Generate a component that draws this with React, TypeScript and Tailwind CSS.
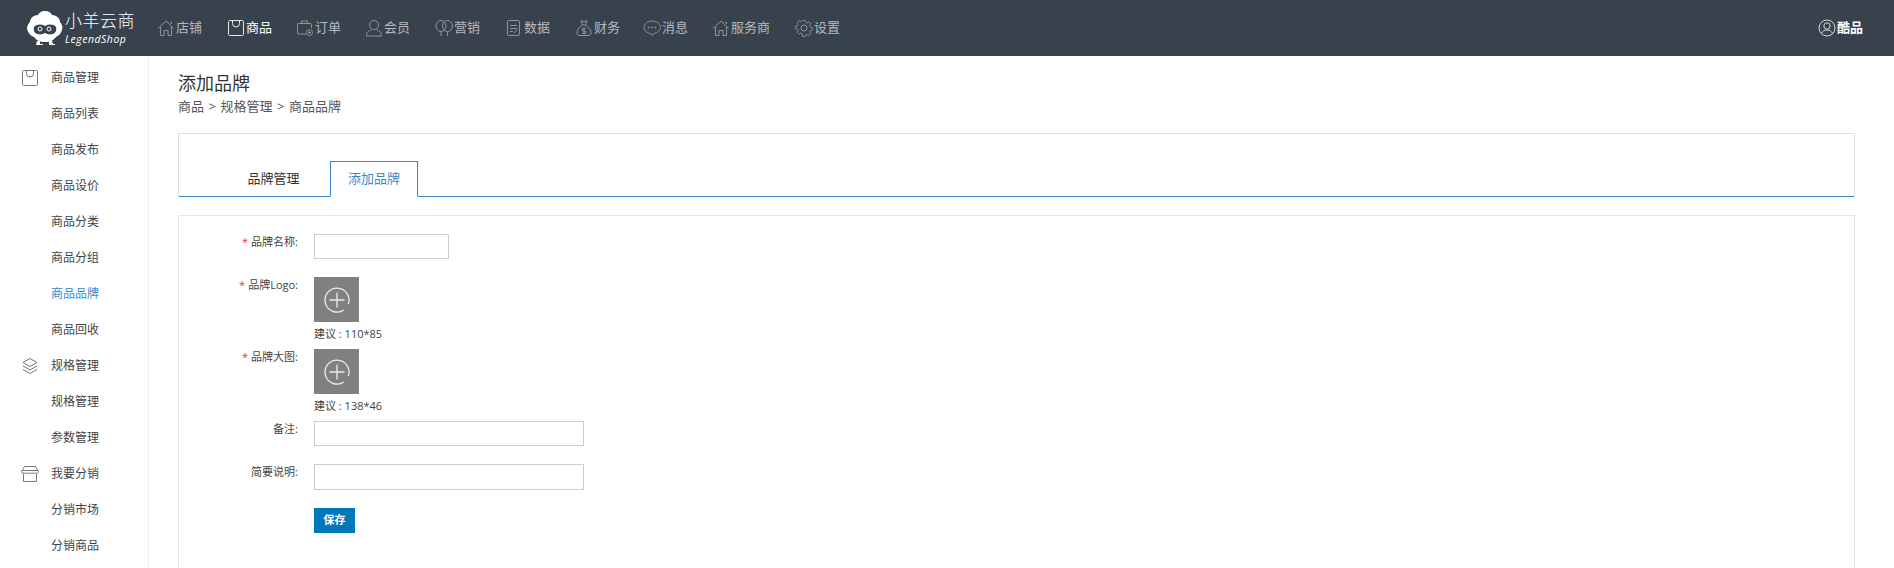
import type { ReactNode } from 'react'

const font = { stroke: 'currentColor', fill: 'none', strokeWidth: 1 } as const

function Icon({ children, className = '' }: { children: ReactNode; className?: string }) {
  return (
    <svg viewBox="0 0 18 18" {...font} className={`w-[18px] h-[18px] shrink-0 ${className}`}>
      {children}
    </svg>
  )
}

const HomeIcon = () => (
  <Icon>
    <path d="M1 9.500 9 2l7.500 7.500M3.500 8v8.500h3.500v-5h4v5h3.500V8M13 3.500h1.500V5" />
  </Icon>
)
const BagIcon = () => (
  <Icon>
    <path d="M2.500 1.500h13a1 1 0 0 1 1 1v13a1 1 0 0 1-1 1h-13a1 1 0 0 1-1-1v-13a1 1 0 0 1 1-1z" />
    <path d="M5.500 2v2.500a3.500 3.500 0 0 0 7 0V2" />
  </Icon>
)
const OrderIcon = () => (
  <Icon>
    <path d="M10 15H2.500a1 1 0 0 1-1-1V5.500a1 1 0 0 1 1-1h12a1 1 0 0 1 1 1V9M5.500 4.500V2h6v2.500" />
    <circle cx="13.500" cy="13.500" r="3" />
    <path d="M12 13.500h3M13.500 12v3" />
  </Icon>
)
const UserIcon = () => (
  <Icon>
    <circle cx="9" cy="6" r="4.500" />
    <path d="M1.500 17v-1.500c0-2.500 2.500-4 5-4.500M16.500 17v-1.500c0-2.500-2.500-4-5-4.500M1.500 17h15" />
  </Icon>
)
const MarketIcon = () => (
  <Icon>
    <ellipse cx="6" cy="7" rx="5" ry="5.500" />
    <ellipse cx="12.500" cy="7" rx="5" ry="5.500" />
    <path d="M6 12.500V17M12.500 12.500V17" />
  </Icon>
)
const DataIcon = () => (
  <Icon>
    <path d="M13 1.500H4a1.500 1.500 0 0 0-1.500 1.500v12A1.500 1.500 0 0 0 4 16.500h9a1.500 1.500 0 0 0 1.500-1.500V3A1.500 1.500 0 0 0 13 1.500z" />
    <path d="M5 6.500h7M5 9.500h7M5 12.500h3M9 14l3.500-3.500" />
  </Icon>
)
const MoneyIcon = () => (
  <Icon>
    <path d="M6 1.500 9 3l3-1.500L10.500 6h-3zM7.500 6C4 8 2 11 2 14c0 2 1.500 2.500 3 2.500h8c1.500 0 3-.5 3-2.500 0-3-2-6-5.500-8" />
    <path d="M10.500 9.500H8.200a1.200 1.200 0 0 0 0 2.500h1.600a1.200 1.200 0 0 1 0 2.500H7.500M9 8.500v7" />
  </Icon>
)
const ChatIcon = () => (
  <Icon>
    <path d="M9 2c-4.500 0-8 2.800-8 6.300 0 3.500 3.500 6.200 7 6.200l1.500 2 1.500-2.300c3.500-.5 6.500-2.800 6.500-5.900C17.500 4.800 13.500 2 9 2z" />
    <circle cx="5.500" cy="8.500" r=".6" fill="currentColor" />
    <circle cx="9" cy="8.500" r=".6" fill="currentColor" />
    <circle cx="12.500" cy="8.500" r=".6" fill="currentColor" />
  </Icon>
)
const GearIcon = () => (
  <Icon>
    <path d="M7.500 1h3l.5 2.300 1.500.7 2-1.300 2.100 2.100-1.300 2 .7 1.500 2.300.5v3l-2.300.5-.7 1.500 1.300 2-2.100 2.100-2-1.300-1.500.7-.5 1.800h-3L7 15.800l-1.500-.7-2 1.300-2.100-2.100 1.300-2-.7-1.500L-.3 10.300v-3L2 6.800l.7-1.500-1.300-2 2.100-2.100 2 1.300 1.500-.7z" transform="translate(.9 .5) scale(.9)" />
    <circle cx="9" cy="9" r="3" />
  </Icon>
)
const LayersIcon = () => (
  <Icon>
    <path d="m9 1.500 7 4-7 4-7-4zM2 9l7 4 7-4M2 12.500l7 4 7-4" />
  </Icon>
)
const StoreIcon = () => (
  <Icon>
    <path d="M3.500 1.500h11l3 5a2 2 0 0 1-2.800 1.500 3 3 0 0 1-2.900 0 3 3 0 0 1-3 0 3 3 0 0 1-3 0 3 3 0 0 1-2.800 0A2 2 0 0 1 .5 6.500zM1 5.500h16M2.500 8.500v8h13v-8" />
  </Icon>
)

const navItems: { label: string; icon: ReactNode; active?: boolean; width: string }[] = [
  { label: '店铺', icon: <HomeIcon />, width: 'w-[70px]' },
  { label: '商品', icon: <BagIcon />, active: true, width: 'w-[69px]' },
  { label: '订单', icon: <OrderIcon />, width: 'w-[69px]' },
  { label: '会员', icon: <UserIcon />, width: 'w-[70px]' },
  { label: '营销', icon: <MarketIcon />, width: 'w-[70px]' },
  { label: '数据', icon: <DataIcon />, width: 'w-[70px]' },
  { label: '财务', icon: <MoneyIcon />, width: 'w-[68px]' },
  { label: '消息', icon: <ChatIcon />, width: 'w-[69px]' },
  { label: '服务商', icon: <HomeIcon />, width: 'w-[83px]' },
  { label: '设置', icon: <GearIcon />, width: 'w-[70px]' },
]

const sideItems: { label: string; icon?: ReactNode; active?: boolean }[] = [
  { label: '商品管理', icon: <BagIcon /> },
  { label: '商品列表' },
  { label: '商品发布' },
  { label: '商品设价' },
  { label: '商品分类' },
  { label: '商品分组' },
  { label: '商品品牌', active: true },
  { label: '商品回收' },
  { label: '规格管理', icon: <LayersIcon /> },
  { label: '规格管理' },
  { label: '参数管理' },
  { label: '我要分销', icon: <StoreIcon /> },
  { label: '分销市场' },
  { label: '分销商品' },
]

function Logo() {
  return (
    <div className="flex items-center w-[157px] pl-[27px] shrink-0">
      <svg viewBox="0 0 36 36" className="w-[36px] h-[38px] shrink-0">
        <path
          d="M18 1c4 0 6 2 7 4 4 0 8 3 8 7 2 2 3 5 2 8-1 4-4 6-6 7-2 3-6 5-11 5s-9-2-11-5c-3-1-6-4-7-8 0-3 1-5 3-7 0-4 4-7 8-7 1-2 3-4 7-4z"
          fill="#fff"
        />
        <path d="M7 17c3-3 7-3 11-1 4-2 8-2 11 1 1 4-1 7-4 7-3 1-5 0-7-1-2 1-5 2-7 1-3 0-5-3-4-7z" fill="#38424d" />
        <circle cx="13" cy="19" r="2" fill="none" stroke="#fff" strokeWidth="1" />
        <circle cx="22" cy="19" r="2" fill="none" stroke="#fff" strokeWidth="1" />
        <path d="M10 31h3v3h3v1h-7zM22 31h3l1 3h2v1h-6z" fill="#fff" />
      </svg>
      <div className="ml-[2px] text-white shrink-0">
        <div className="text-[17px] leading-[22px] tracking-[0.5px] font-light whitespace-nowrap">小羊云商</div>
        <div className="text-[10.5px] leading-[14px] italic tracking-[0.5px] whitespace-nowrap">LegendShop</div>
      </div>
    </div>
  )
}

function Header() {
  return (
    <header className="h-[56px] bg-[#38424d] flex items-center pr-[31px] pb-px shrink-0">
      <Logo />
      <nav className="flex">
        {navItems.map((item) => (
          <div
            key={item.label}
            className={`flex items-center gap-px text-[13px] ${item.width} ${item.active ? 'text-white' : 'text-[#b4b9be]'}`}
          >
            <span className={item.active ? 'text-[#e4e6e8]' : 'text-[#8d949b]'}>{item.icon}</span>
            <span>{item.label}</span>
          </div>
        ))}
      </nav>
      <div className="ml-auto flex items-center gap-px text-[13px] font-bold text-white">
        <svg viewBox="0 0 18 18" {...font} className="w-[18px] h-[18px] text-[#d5d7da]">
          <circle cx="9" cy="9" r="8" />
          <circle cx="9" cy="7" r="3.200" />
          <path d="M3.500 14.500c1-2.500 3-3.500 5.500-3.500s4.500 1 5.500 3.500" />
        </svg>
        <span>酷品</span>
      </div>
    </header>
  )
}

function Sidebar() {
  return (
    <aside className="w-[149px] shrink-0 border-r border-[#f0f0f0] pt-[4px]">
      {sideItems.map((item, i) => (
        <div
          key={i}
          className={`h-[36px] flex items-center text-[12px] ${item.active ? 'text-[#3a87c8]' : 'text-[#444]'}`}
        >
          <span className="w-[51px] flex justify-center pl-[14px] pr-[6px] text-[#777]">{item.icon}</span>
          {item.label}
        </div>
      ))}
    </aside>
  )
}

function Label({ text, required }: { text: string; required?: boolean }) {
  return (
    <label className="block w-[104px] shrink-0 text-right text-[11px] leading-[16px] text-[#444] whitespace-nowrap">
      {required && <span className="text-[#e4393c] mr-[3px]">*</span>}
      {text}:
    </label>
  )
}

function UploadBox() {
  return (
    <div className="w-[45px] h-[45px] bg-[#808080] flex items-center justify-center">
      <svg viewBox="0 0 26 26" fill="none" stroke="#ececec" strokeWidth="1.300" className="w-[26px] h-[26px]">
        <path d="M19.700 23A12 12 0 1 1 24.300 17.100" />
        <path d="M5.500 13h15M13 5.500v15" />
      </svg>
    </div>
  )
}

function BrandForm() {
  return (
    <div className="mt-[18px] border border-[#e6e6e6] h-[400px] shrink-0 pt-[18px] pl-[15px]">
      <div className="flex h-[25px]">
        <Label text="品牌名称" required />
        <input className="ml-[16px] w-[135px] h-[25px] border border-[#ccc] bg-white" />
      </div>
      <div className="flex mt-[18px]">
        <Label text="品牌Logo" required />
        <div className="ml-[16px]">
          <UploadBox />
          <div className="text-[11px] leading-[16px] text-[#444] mt-[4px]">建议 : 110*85</div>
        </div>
      </div>
      <div className="flex mt-[7px]">
        <Label text="品牌大图" required />
        <div className="ml-[16px]">
          <UploadBox />
          <div className="text-[11px] leading-[16px] text-[#444] mt-[4px]">建议 : 138*46</div>
        </div>
      </div>
      <div className="flex mt-[7px]">
        <Label text="备注" />
        <input className="ml-[16px] w-[270px] h-[25px] border border-[#ccc] bg-white" />
      </div>
      <div className="flex mt-[18px]">
        <Label text="简要说明" />
        <input className="ml-[16px] w-[270px] h-[26px] border border-[#ccc] bg-white" />
      </div>
      <button className="block ml-[120px] mt-[18px] w-[41px] h-[25px] bg-[#0077bb] text-white text-[11px] font-bold">
        保存
      </button>
    </div>
  )
}

export default function App() {
  return (
    <div
      className="h-[568px] w-[1894px] overflow-hidden bg-white flex flex-col"
      style={{ fontFamily: '"Open Sans", "Noto Sans CJK SC", sans-serif' }}
    >
      <Header />
      <div className="flex flex-1 min-h-0">
        <Sidebar />
        <main className="flex-1 pl-[29px] pr-[39px] flex flex-col">
          <h1 className="text-[18px] leading-[24px] text-[#333] mt-[15px]">添加品牌</h1>
          <div className="text-[13px] leading-[18px] text-[#555] mt-[2px] flex gap-[4.5px]">
            <span>商品</span><span>&gt;</span><span>规格管理</span><span>&gt;</span><span>商品品牌</span>
          </div>
          <div className="mt-[18px] h-[64px] shrink-0 border border-[#ddd] border-b-0 flex items-end">
            <div className="flex w-full border-b border-[#3a87c8] h-[36px]">
              <div className="ml-[38px] w-[113px] h-[36px] flex items-center justify-center text-[13px] text-[#333]">品牌管理</div>
              <div className="w-[88px] h-[36px] bg-white border border-[#3a87c8] border-b-white flex items-center justify-center text-[13px] text-[#3a87c8]">添加品牌</div>
            </div>
          </div>
          <BrandForm />
        </main>
      </div>
    </div>
  )
}
